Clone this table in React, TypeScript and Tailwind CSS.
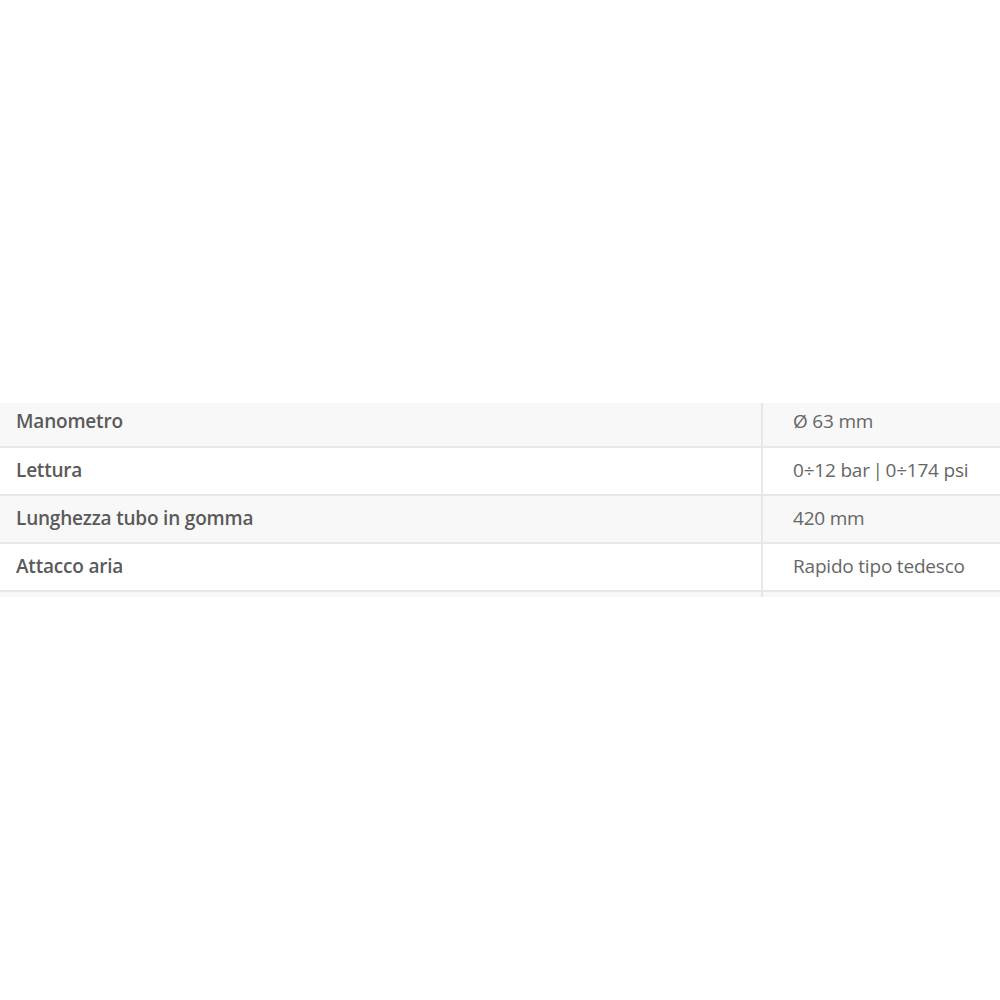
import React from "react";

const rows: { label: string; value: string }[] = [
  { label: "Manometro", value: "Ø 63 mm" },
  { label: "Lettura", value: "0÷12 bar | 0÷174 psi" },
  { label: "Lunghezza tubo in gomma", value: "420 mm" },
  { label: "Attacco aria", value: "Rapido tipo tedesco" },
];

export default function App() {
  return (
    <div className="w-[1000px] h-[1000px] bg-white pt-[403px] font-['Open_Sans','Liberation_Sans',sans-serif] text-[19px] tracking-[-0.2px]">
      <div className="w-full">
        {rows.map((row, i) => (
          <div
            key={row.label}
            className={`flex border-b-2 border-[#e8e8e8] ${i === 0 ? "h-[45px]" : "h-[48px]"} ${
              i % 2 === 0 ? "bg-[#f8f8f8]" : "bg-white"
            }`}
          >
            <div className={`w-[761px] pl-4 flex items-center font-semibold text-[#5a5a5a] ${i === 0 ? "pb-[6px]" : "pb-px"}`}>
              {row.label}
            </div>
            <div className={`flex-1 border-l-2 border-[#e8e8e8] pl-[30px] flex items-center text-[#666666] ${i === 0 ? "pb-[6px]" : "pb-px"}`}>
              {i === 1 ? (
                <span>
                  0÷12 bar<span className="mx-[-2px]"> | </span>0÷174 psi
                </span>
              ) : (
                row.value
              )}
            </div>
          </div>
        ))}
        <div className="flex h-[5px] bg-[#f8f8f8]">
          <div className="w-[761px]" />
          <div className="flex-1 border-l-2 border-[#e8e8e8]" />
        </div>
      </div>
    </div>
  );
}
